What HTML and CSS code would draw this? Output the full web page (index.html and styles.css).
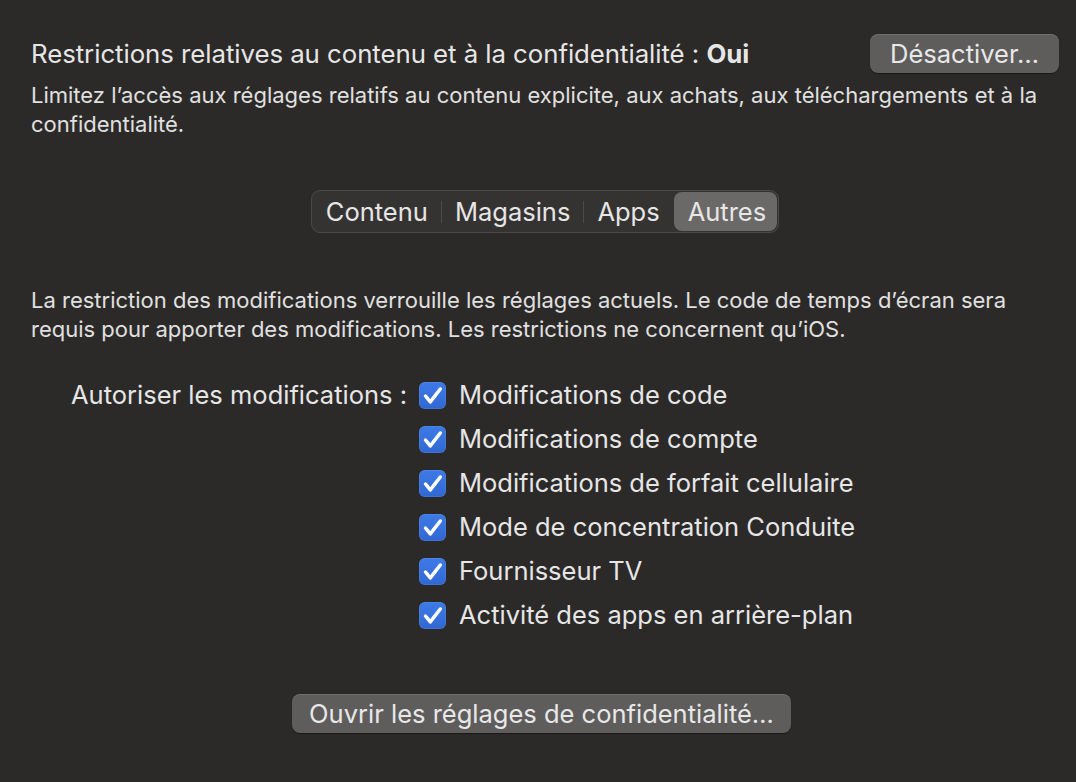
FILE: index.html
```html
<!DOCTYPE html>
<html lang="fr">
<head>
<meta charset="utf-8">
<link rel="stylesheet" href="styles.css">
</head>
<body>
<div class="page">
  <div class="header">
    <div class="title">Restrictions relatives au contenu et à la confidentialité : <b>Oui</b></div>
    <button class="btn btn-off">Désactiver…</button>
  </div>
  <p class="desc">Limitez l’accès aux réglages relatifs au contenu explicite, aux achats, aux téléchargements et à la confidentialité.</p>

  <div class="seg-wrap">
    <div class="seg">
      <span class="seg-item">Contenu</span>
      <span class="sep"></span>
      <span class="seg-item">Magasins</span>
      <span class="sep"></span>
      <span class="seg-item">Apps</span>
      <span class="seg-item active">Autres</span>
    </div>
  </div>

  <p class="desc2">La restriction des modifications verrouille les réglages actuels. Le code de temps d’écran sera requis pour apporter des modifications. Les restrictions ne concernent qu’iOS.</p>

  <div class="allow">
    <div class="allow-label">Autoriser les modifications :</div>
    <div class="checks">
      <label class="check"><span class="box"><svg viewBox="0 0 27 27"><path d="M6.5 14l4.8 5.8L21.3 7" /></svg></span>Modifications de code</label>
      <label class="check"><span class="box"><svg viewBox="0 0 27 27"><path d="M6.5 14l4.8 5.8L21.3 7" /></svg></span>Modifications de compte</label>
      <label class="check"><span class="box"><svg viewBox="0 0 27 27"><path d="M6.5 14l4.8 5.8L21.3 7" /></svg></span>Modifications de forfait cellulaire</label>
      <label class="check"><span class="box"><svg viewBox="0 0 27 27"><path d="M6.5 14l4.8 5.8L21.3 7" /></svg></span>Mode de concentration Conduite</label>
      <label class="check"><span class="box"><svg viewBox="0 0 27 27"><path d="M6.5 14l4.8 5.8L21.3 7" /></svg></span>Fournisseur TV</label>
      <label class="check"><span class="box"><svg viewBox="0 0 27 27"><path d="M6.5 14l4.8 5.8L21.3 7" /></svg></span>Activité des apps en arrière-plan</label>
    </div>
  </div>

  <div class="bottom">
    <button class="btn btn-privacy">Ouvrir les réglages de confidentialité…</button>
  </div>
</div>
</body>
</html>
```

FILE: styles.css
```css
html, body {
  margin: 0;
  padding: 0;
  background: #2c2a28;
}
body {
  font-family: Inter, "Noto Sans", sans-serif;
  color: #e3e3e3;
  width: 1076px;
  height: 782px;
  overflow: hidden;
}
.page {
  padding: 34px 17px 0 31px;
  box-sizing: border-box;
  width: 1076px;
}
.header {
  display: flex;
  align-items: center;
  justify-content: space-between;
  height: 39px;
}
.title {
  font-size: 25.8px;
  letter-spacing: -0.05px;
  color: #e6e6e6;
}
.title b {
  font-weight: 700;
}
.btn {
  font-family: inherit;
  color: #e8e8e8;
  background: #5e5d5c;
  border: none;
  border-radius: 8px;
  box-shadow: inset 0 1px 0 rgba(255,255,255,0.12), 0 0.5px 1px rgba(0,0,0,0.4);
  padding: 0;
}
.btn-off {
  width: 189px;
  height: 39px;
  font-size: 25.5px;
}
.desc {
  margin: 8px 0 0 0;
  font-size: 22px;
  line-height: 29px;
  color: #e0e0e0;
}
.seg-wrap {
  display: flex;
  justify-content: center;
  margin-top: 51px;
}
.seg {
  display: flex;
  align-items: center;
  height: 43px;
  box-sizing: border-box;
  border: 1px solid #4b4947;
  border-radius: 9px;
  background: #353331;
  padding: 1px;
}
.seg-item {
  font-size: 25.5px;
  padding: 0 13px;
  line-height: 39px;
  height: 39px;
  color: #e6e6e6;
}
.seg-item.active {
  background: #6a6967;
  border-radius: 8px;
  padding: 0 11px 0 14px;
  margin-left: 1px;
}
.sep {
  width: 1px;
  height: 22px;
  background: #4d4b49;
}
.desc2 {
  margin: 53px 0 0 0;
  font-size: 22px;
  line-height: 28.5px;
  color: #e0e0e0;
}
.allow {
  display: flex;
  margin-top: 37px;
  padding-left: 40px;
}
.allow-label {
  font-size: 25.5px;
  line-height: 30px;
  width: 348px;
  color: #e6e6e6;
}
.checks {
  display: flex;
  flex-direction: column;
  gap: 14px;
}
.check {
  display: flex;
  align-items: center;
  font-size: 25.5px;
  line-height: 30px;
  height: 30px;
  color: #e6e6e6;
}
.box {
  width: 27px;
  height: 27px;
  border-radius: 6px;
  background: linear-gradient(#3e7be6, #3067d3);
  box-shadow: inset 0 0 0 0.5px rgba(255,255,255,0.15);
  margin-right: 13px;
  display: flex;
  align-items: center;
  justify-content: center;
}
.box svg {
  width: 27px;
  height: 27px;
}
.box path {
  fill: none;
  stroke: #ffffff;
  stroke-width: 3.5;
  stroke-linecap: round;
  stroke-linejoin: round;
}
.bottom {
  display: flex;
  justify-content: center;
  margin-top: 64px;
  padding-right: 7px;
}
.btn-privacy {
  width: 499px;
  height: 39px;
  font-size: 25.5px;
}
```
